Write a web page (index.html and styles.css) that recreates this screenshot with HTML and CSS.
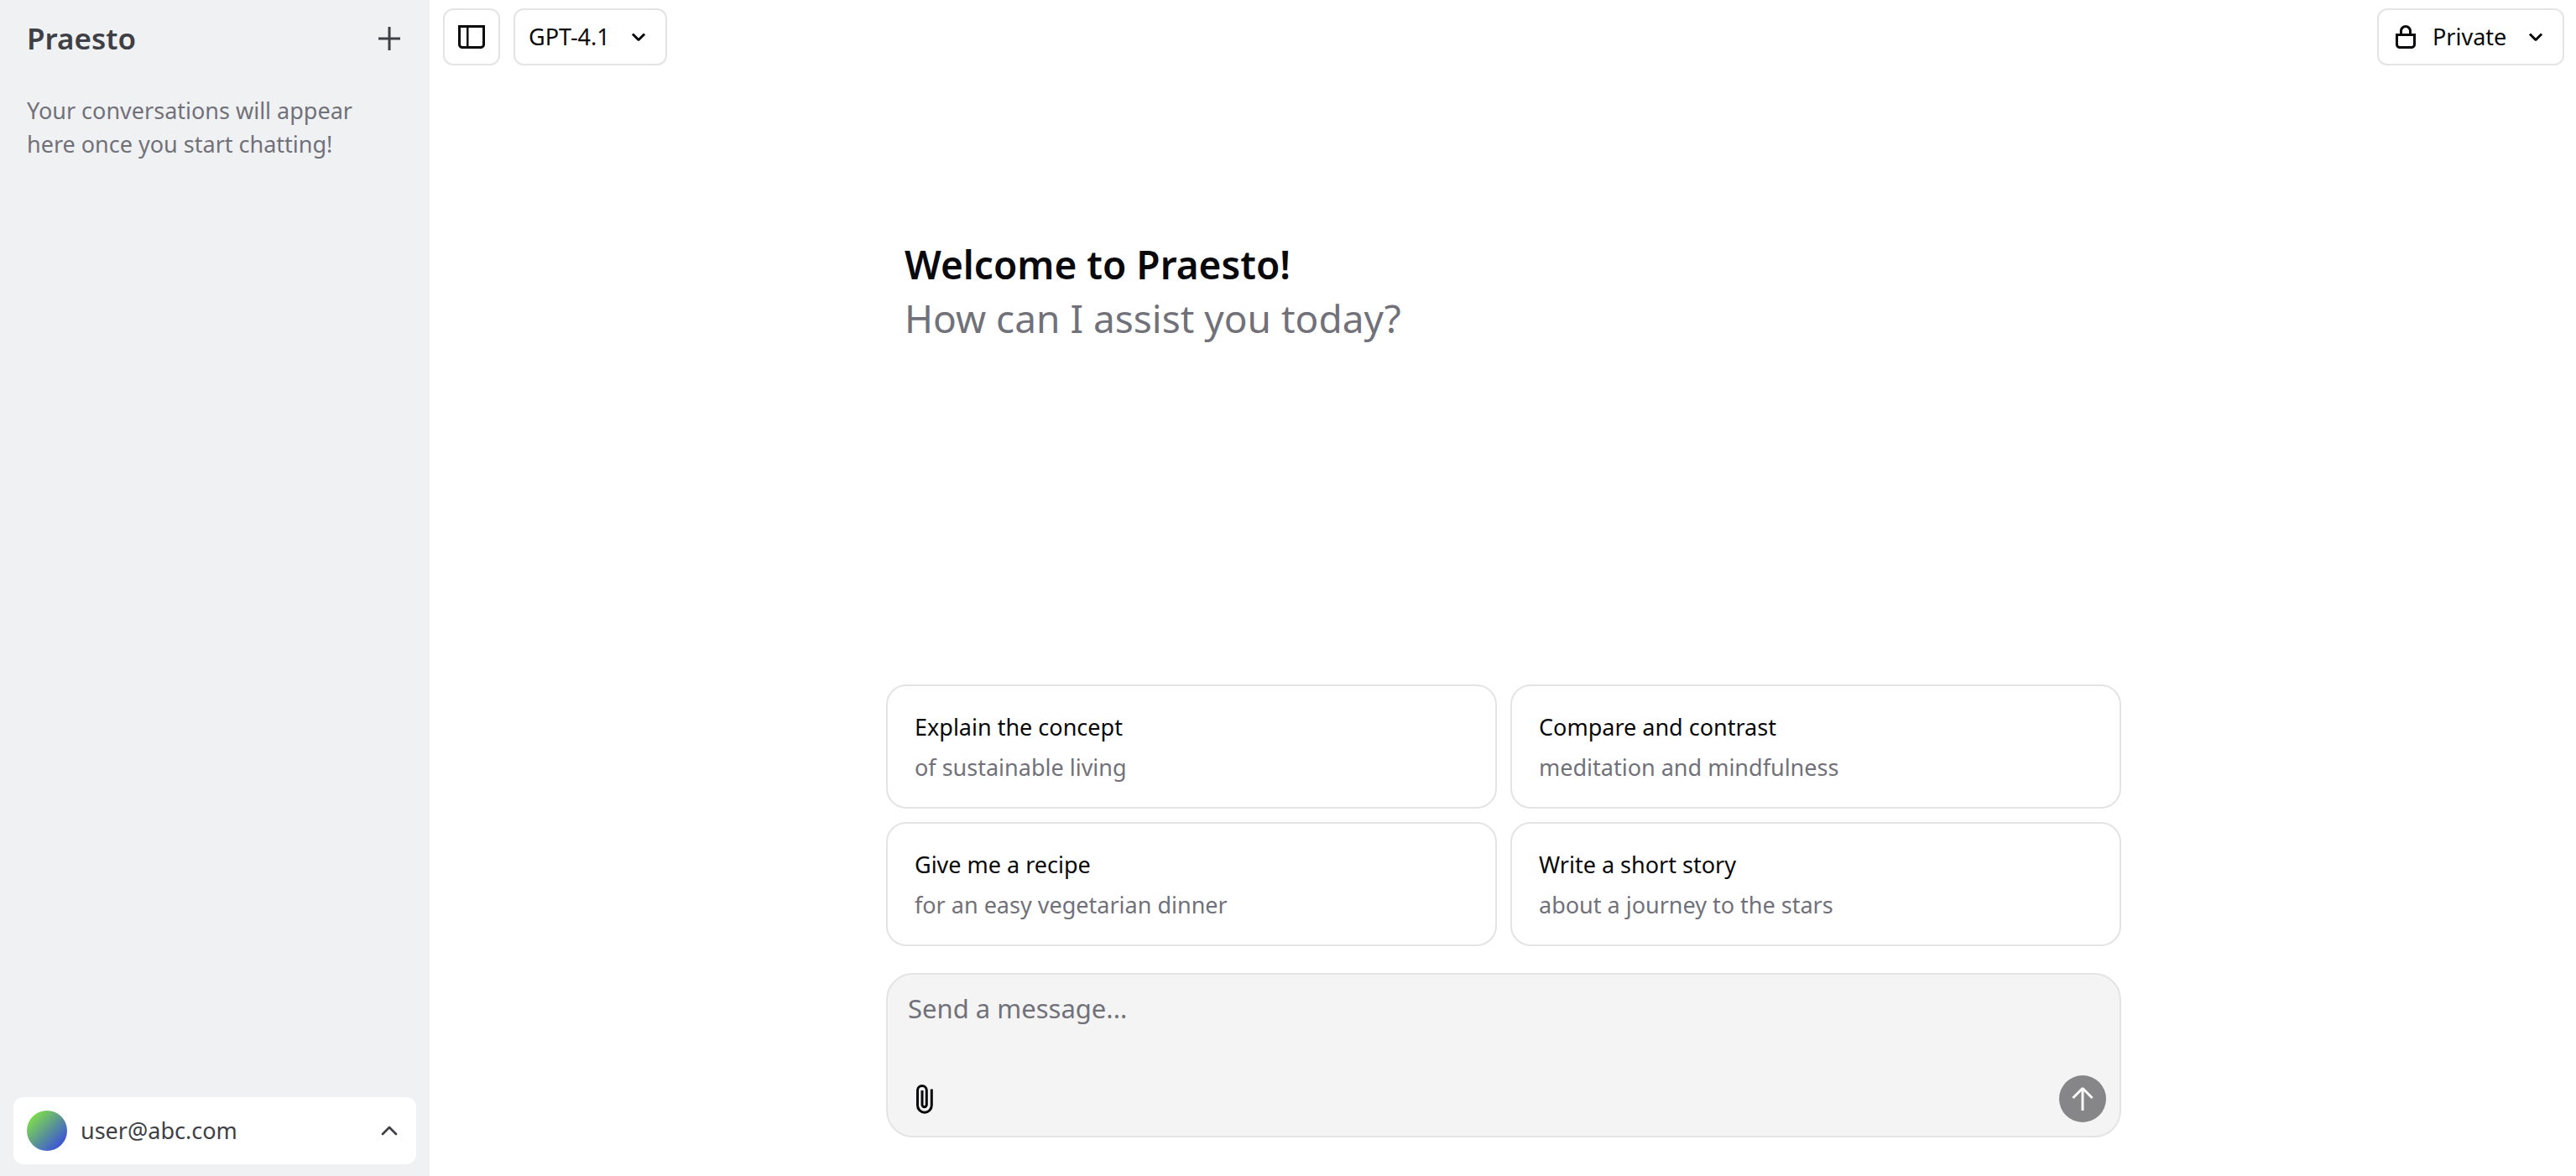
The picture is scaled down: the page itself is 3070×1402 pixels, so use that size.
FILE: index.html
```html
<!DOCTYPE html>
<html lang="en">
<head>
  <meta charset="utf-8">
  <meta name="viewport" content="width=device-width, initial-scale=1">
  <title>Praesto</title>
  <link rel="stylesheet" href="styles.css">
</head>
<body>
  <div class="app">
    <aside class="sidebar">
      <div class="sidebar-header">
        <a class="brand" href="#">Praesto</a>
        <button class="icon-button" type="button" aria-label="New chat">
          <svg class="icon" viewBox="0 0 16 16"><path d="M8.75 1H7.25V7.25H1.5V8.75H7.25V15H8.75V8.75H14.5V7.25H8.75V1Z"/></svg>
        </button>
      </div>
      <p class="history-empty">Your conversations will appear here once you start chatting!</p>
      <button class="user-menu" type="button">
        <span class="avatar"></span>
        <span class="user-email">user@abc.com</span>
        <svg class="icon icon-line" viewBox="0 0 24 24"><path d="m18 15-6-6-6 6"/></svg>
      </button>
    </aside>

    <main class="main">
      <header class="toolbar">
        <button class="toolbar-button" type="button" aria-label="Toggle sidebar">
          <svg class="icon" viewBox="0 0 16 16"><path fill-rule="evenodd" d="M6.245 2.5H14.5V12.5C14.5 13.0523 14.0523 13.5 13.5 13.5H6.245V2.5ZM4.995 2.5H1.5V12.5C1.5 13.0523 1.94772 13.5 2.5 13.5H4.995V2.5ZM0 1H16V12.5C16 13.8807 14.8807 15 13.5 15H2.5C1.11929 15 0 13.8807 0 12.5V1Z"/></svg>
        </button>
        <div class="picker">
          <select class="picker-select" aria-label="Model">
            <option>GPT-4.1</option>
          </select>
          <svg class="icon picker-chevron" viewBox="0 0 16 16"><path d="M12.0607 6.75L8.7071 10.1035C8.31657 10.4941 7.68341 10.4941 7.29288 10.1035L3.93933 6.75L5 5.68933L8 8.68933L11 5.68933L12.0607 6.75Z"/></svg>
        </div>
        <div class="picker picker-visibility">
          <svg class="icon picker-lead" viewBox="0 0 16 16"><path fill-rule="evenodd" d="M10 4.5V6H6V4.5C6 3.39543 6.89543 2.5 8 2.5C9.10457 2.5 10 3.39543 10 4.5ZM4.5 6V4.5C4.5 2.567 6.067 1 8 1C9.933 1 11.5 2.567 11.5 4.5V6H14V12.5C14 13.8807 12.8807 15 11.5 15H4.5C3.11929 15 2 13.8807 2 12.5V6H4.5ZM3.5 7.5V12.5C3.5 13.0523 3.94772 13.5 4.5 13.5H11.5C12.0523 13.5 12.5 13.0523 12.5 12.5V7.5H3.5Z"/></svg>
          <select class="picker-select" aria-label="Visibility">
            <option>Private</option>
          </select>
          <svg class="icon picker-chevron" viewBox="0 0 16 16"><path d="M12.0607 6.75L8.7071 10.1035C8.31657 10.4941 7.68341 10.4941 7.29288 10.1035L3.93933 6.75L5 5.68933L8 8.68933L11 5.68933L12.0607 6.75Z"/></svg>
        </div>
      </header>

      <section class="greeting">
        <h1 class="greeting-title">Welcome to Praesto!</h1>
        <p class="greeting-question">How can I assist you today?</p>
      </section>

      <div class="suggestions">
        <button class="suggestion" type="button">
          <span class="suggestion-title">Explain the concept</span>
          <span class="suggestion-detail">of sustainable living</span>
        </button>
        <button class="suggestion" type="button">
          <span class="suggestion-title">Compare and contrast</span>
          <span class="suggestion-detail">meditation and mindfulness</span>
        </button>
        <button class="suggestion" type="button">
          <span class="suggestion-title">Give me a recipe</span>
          <span class="suggestion-detail">for an easy vegetarian dinner</span>
        </button>
        <button class="suggestion" type="button">
          <span class="suggestion-title">Write a short story</span>
          <span class="suggestion-detail">about a journey to the stars</span>
        </button>
      </div>

      <form class="composer">
        <textarea class="composer-input" aria-label="Message" placeholder="Send a message..."></textarea>
        <div class="composer-actions">
          <button class="attach-button" type="button" aria-label="Attach files">
            <svg class="clip" viewBox="0 0 32 36"><path d="M24.3 6.5V25.8a8.4 8.4 0 0 1-16.8 0V7.8a5.4 5.4 0 0 1 10.8 0V25a2.65 2.65 0 0 1-5.3 0V8"/></svg>
          </button>
          <button class="send-button" type="button" aria-label="Send message">
            <svg class="icon" viewBox="0 0 16 16"><path d="M8.70711 1.39644C8.31659 1.00592 7.68342 1.00592 7.2929 1.39644L1.68935 7L2.75 8.06065L7.25 3.56065V15H8.75V3.56065L13.25 8.06065L14.3107 7L8.70711 1.39644Z"/></svg>
          </button>
        </div>
      </form>
    </main>
  </div>
</body>
</html>
```
FILE: styles.css
```css
:root {
  --text: #09090b;
  --text-soft: #3f3f46;
  --muted: #71717a;
  --border: #e4e4e4;
  --sidebar: #f0f1f3;
}

* {
  box-sizing: border-box;
}

body {
  margin: 0;
  background: #fff;
  color: var(--text);
  font-family: "Noto Sans", "Open Sans", sans-serif;
  font-size: 27px;
  line-height: 40px;
}

button,
select,
textarea {
  margin: 0;
  padding: 0;
  border: 0;
  background: none;
  color: inherit;
  font: inherit;
}

h1,
p {
  margin: 0;
}

.app {
  display: flex;
  min-height: 100vh;
}

.icon {
  flex: none;
  display: block;
  width: 32px;
  height: 32px;
  fill: currentColor;
}

.icon-line {
  fill: none;
  stroke: currentColor;
  stroke-width: 2;
  stroke-linecap: round;
  stroke-linejoin: round;
}

/* Sidebar */

.sidebar {
  flex: none;
  display: flex;
  flex-direction: column;
  width: 512px;
  padding: 16px 16px 14px;
  background: var(--sidebar);
  color: var(--text-soft);
}

.sidebar-header {
  display: flex;
  align-items: center;
  justify-content: space-between;
  padding: 10px 16px;
}

.brand {
  color: inherit;
  font-size: 35px;
  font-weight: 600;
  text-decoration: none;
}

.history-empty {
  padding: 36px 16px;
  color: var(--muted);
}

.user-menu {
  display: flex;
  align-items: center;
  gap: 16px;
  margin-top: auto;
  padding: 16px;
  border-radius: 12px;
  background: #fff;
  text-align: left;
}

.avatar {
  width: 48px;
  height: 48px;
  border-radius: 50%;
  background: linear-gradient(135deg, #8bf630, #2d39f3);
}

.user-email {
  flex: 1;
}

/* Main column */

.main {
  flex: 1;
  display: flex;
  flex-direction: column;
  align-items: center;
  min-width: 0;
  padding: 0 0 46px 2px;
}

.toolbar {
  align-self: stretch;
  display: flex;
  gap: 16px;
  padding: 10px 14px;
}

.toolbar-button,
.picker-select {
  height: 68px;
  border: 2px solid var(--border);
  border-radius: 12px;
  background: #fff;
}

.toolbar-button {
  padding: 0 16px;
}

.picker {
  display: grid;
  align-items: center;
}

.picker > * {
  grid-area: 1 / 1;
}

.picker-select {
  appearance: none;
  padding: 0 66px 0 16px;
}

.picker-chevron,
.picker-lead {
  z-index: 1;
  pointer-events: none;
}

.picker-chevron {
  justify-self: end;
  margin-right: 18px;
}

.picker-lead {
  margin-left: 18px;
}

.picker-visibility {
  margin-left: auto;
}

.picker-visibility .picker-select {
  padding-left: 64px;
}

.greeting,
.suggestions,
.composer {
  width: calc(100% - 64px);
  max-width: 1472px;
}

.greeting {
  flex: 1;
  padding: 195px 22px 32px;
  font-size: 46px;
  line-height: 64px;
}

.greeting-title {
  font-size: inherit;
  font-weight: 600;
}

.greeting-question {
  color: var(--muted);
}

.suggestions {
  display: grid;
  grid-template-columns: 1fr 1fr;
  gap: 16px;
  margin-bottom: 32px;
}

.suggestion {
  display: flex;
  flex-direction: column;
  gap: 8px;
  padding: 29px 32px 27px;
  border: 2px solid var(--border);
  border-radius: 24px;
  text-align: left;
}

.suggestion-detail {
  color: var(--muted);
}

.composer {
  padding: 20px 16px 16px;
  border: 2px solid var(--border);
  border-radius: 32px;
  background: #f4f4f4;
}

.composer-input {
  display: block;
  width: 100%;
  height: 100px;
  padding: 0 8px;
  outline: 0;
  font-size: 31px;
  resize: none;
}

.composer-input::placeholder {
  color: var(--muted);
  opacity: 1;
}

.composer-actions {
  display: flex;
  justify-content: space-between;
}

.attach-button,
.send-button {
  display: grid;
  place-items: center;
  width: 56px;
  height: 56px;
  border-radius: 50%;
}

.clip {
  width: 32px;
  height: 36px;
  fill: none;
  stroke: currentColor;
  stroke-width: 3;
}

.send-button {
  background: #868688;
  color: #f9f9f9;
}
```
